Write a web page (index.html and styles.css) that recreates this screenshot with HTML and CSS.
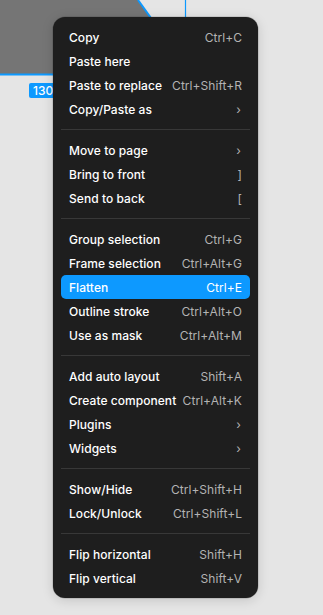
FILE: index.html
```html
<!DOCTYPE html>
<html lang="en">
<head>
    <meta charset="UTF-8">
    <meta name="viewport" content="width=device-width, initial-scale=1.0">
    <title>Context menu</title>
    <link rel="stylesheet" href="styles.css">
</head>
<body>
    <!-- 画布内容 -->
    <div class="canvas">
        <svg class="artwork" width="323" height="120" viewBox="0 0 323 120">
            <polygon points="-10,0 138,0 192,75 -10,75" fill="#757575"/>
            <polyline points="138,0 192,75" fill="none" stroke="#0d99ff" stroke-width="2"/>
            <line x1="0" y1="74.5" x2="200" y2="74.5" stroke="#0d99ff" stroke-width="2"/>
            <line x1="185.5" y1="0" x2="185.5" y2="40" stroke="#0d99ff" stroke-width="1.2"/>
        </svg>
        <div class="size-badge">130</div>

        <!-- 右键菜单 -->
        <div class="menu">
            <div class="group">
                <div class="item"><span class="label">Copy</span><span class="key">Ctrl+C</span></div>
                <div class="item"><span class="label">Paste here</span></div>
                <div class="item"><span class="label">Paste to replace</span><span class="key">Ctrl+Shift+R</span></div>
                <div class="item"><span class="label">Copy/Paste as</span><span class="chevron">›</span></div>
            </div>
            <div class="sep"></div>
            <div class="group">
                <div class="item"><span class="label">Move to page</span><span class="chevron">›</span></div>
                <div class="item"><span class="label">Bring to front</span><span class="key">]</span></div>
                <div class="item"><span class="label">Send to back</span><span class="key">[</span></div>
            </div>
            <div class="sep"></div>
            <div class="group">
                <div class="item"><span class="label">Group selection</span><span class="key">Ctrl+G</span></div>
                <div class="item"><span class="label">Frame selection</span><span class="key">Ctrl+Alt+G</span></div>
                <div class="item active"><span class="label">Flatten</span><span class="key">Ctrl+E</span></div>
                <div class="item"><span class="label">Outline stroke</span><span class="key">Ctrl+Alt+O</span></div>
                <div class="item"><span class="label">Use as mask</span><span class="key">Ctrl+Alt+M</span></div>
            </div>
            <div class="sep"></div>
            <div class="group">
                <div class="item"><span class="label">Add auto layout</span><span class="key">Shift+A</span></div>
                <div class="item"><span class="label">Create component</span><span class="key">Ctrl+Alt+K</span></div>
                <div class="item"><span class="label">Plugins</span><span class="chevron">›</span></div>
                <div class="item"><span class="label">Widgets</span><span class="chevron">›</span></div>
            </div>
            <div class="sep"></div>
            <div class="group">
                <div class="item"><span class="label">Show/Hide</span><span class="key">Ctrl+Shift+H</span></div>
                <div class="item"><span class="label">Lock/Unlock</span><span class="key">Ctrl+Shift+L</span></div>
            </div>
            <div class="sep"></div>
            <div class="group">
                <div class="item"><span class="label">Flip horizontal</span><span class="key">Shift+H</span></div>
                <div class="item"><span class="label">Flip vertical</span><span class="key">Shift+V</span></div>
            </div>
        </div>
    </div>
</body>
</html>
```

FILE: styles.css
```css
/* 页面基础 */
body {
    margin: 0;
    background: #e5e5e5;
    font-family: Inter, "Noto Sans", sans-serif;
    -webkit-font-smoothing: antialiased;
}

.canvas {
    position: relative;
    width: 323px;
    height: 615px;
    overflow: hidden;
}

.artwork {
    position: absolute;
    left: 0;
    top: 0;
}

/* 尺寸标签，右侧被菜单遮住 */
.size-badge {
    position: absolute;
    left: 29px;
    top: 83px;
    width: 30px;
    height: 15px;
    padding-left: 4px;
    background: #0d99ff;
    color: #fff;
    font-size: 12px;
    font-weight: 500;
    line-height: 15px;
    border-radius: 2px;
}

/* 右键菜单 */
.menu {
    position: absolute;
    left: 53px;
    top: 17px;
    width: 205px;
    padding: 8px 0;
    background: #1e1e1e;
    border-radius: 12px;
    box-shadow: 0 2px 12px rgba(0, 0, 0, 0.15), 0 0 0 0.5px rgba(0, 0, 0, 0.2);
}

.item {
    display: flex;
    align-items: center;
    justify-content: space-between;
    height: 24px;
    margin: 0 8px;
    padding: 0 8px;
    border-radius: 5px;
    font-size: 12px;
    letter-spacing: 0.05px;
}

.item.active {
    background: #0d99ff;
}

.label {
    color: #fff;
    font-weight: 500;
    white-space: nowrap;
}

.key {
    color: #b3b3b3;
    white-space: nowrap;
}

.item.active .key {
    color: #fff;
}

.chevron {
    color: #b3b3b3;
    font-size: 12px;
    padding-right: 1px;
}

/* 分隔线 */
.sep {
    height: 1px;
    margin: 8px 8px;
    background: #383838;
}
```
